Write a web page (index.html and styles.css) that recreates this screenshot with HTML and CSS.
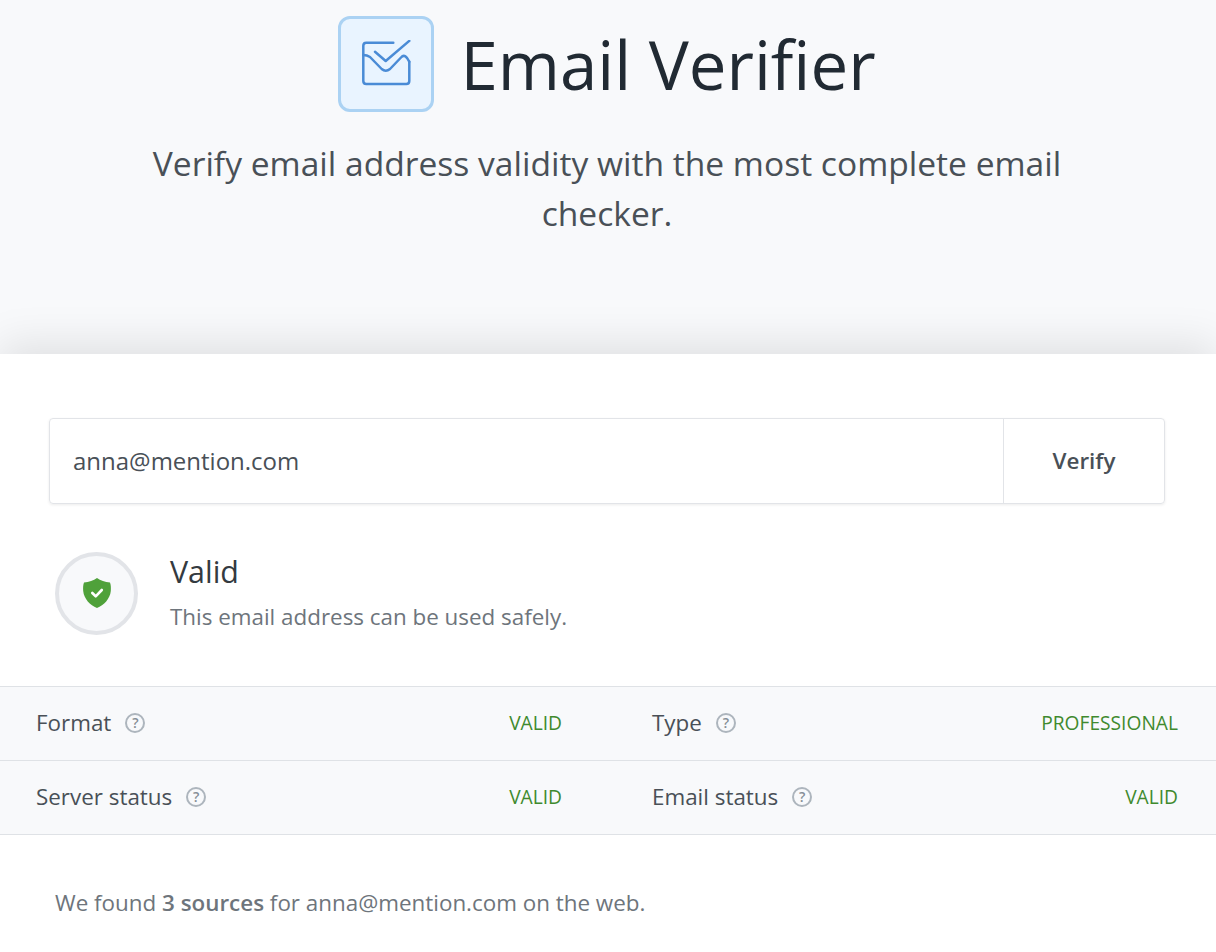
FILE: index.html
```html
<!DOCTYPE html>
<html lang="en">
<head>
  <meta charset="UTF-8">
  <title>Email Verifier</title>
  <link rel="stylesheet" href="styles.css">
</head>
<body>

  <header class="hero">
    <div class="hero-title">
      <div class="hero-icon">
        <svg width="50" height="48" viewBox="0 0 50 48" fill="none" stroke="#4a8bd6" stroke-width="2.500" stroke-linecap="round" stroke-linejoin="round">
          <path d="M32.300 2.700H5.300Q2.300 2.700 2.300 5.700V41Q2.300 44 5.300 44H45.300Q48.300 44 48.300 41V21.700"/>
          <path d="M2.300 15Q6 15 9 17L20.700 29Q24.700 32.500 29 29L40 17.500C43 14 46 16.500 48.300 21.700"/>
          <path d="M14 11.700L24.700 21L48.300 0.900"/>
        </svg>
      </div>
      <h1>Email Verifier</h1>
    </div>
    <p class="hero-text">Verify email address validity with the most complete email checker.</p>
  </header>

  <main class="panel">
    <form class="verify-form">
      <div class="verify-input">anna@mention.com</div>
      <div class="verify-button">Verify</div>
    </form>

    <div class="result">
      <div class="result-badge">
        <svg class="result-shield" width="30" height="32" viewBox="0 0 30 32">
          <path d="M15 1C18.500 3.500 23 5 28 5.500C29 8 29 11 28.800 14C28 22 22 28 15 31C8 28 2 22 1.200 14C1 11 1 8 2 5.500C7 5 11.500 3.500 15 1Z" fill="#4fa13a"/>
          <path d="M10.300 16L13.700 19.300L19.800 13" fill="none" stroke="#fff" stroke-width="2.600" stroke-linecap="round" stroke-linejoin="round"/>
        </svg>
      </div>
      <div>
        <div class="result-title">Valid</div>
        <div class="result-text">This email address can be used safely.</div>
      </div>
    </div>

    <div class="details">
      <div class="details-row">
        <div class="detail">
          <span class="detail-label">Format</span>
          <span class="help">?</span>
          <span class="detail-value">VALID</span>
        </div>
        <div class="detail">
          <span class="detail-label">Type</span>
          <span class="help">?</span>
          <span class="detail-value">PROFESSIONAL</span>
        </div>
      </div>
      <div class="details-row">
        <div class="detail">
          <span class="detail-label">Server status</span>
          <span class="help">?</span>
          <span class="detail-value">VALID</span>
        </div>
        <div class="detail">
          <span class="detail-label">Email status</span>
          <span class="help">?</span>
          <span class="detail-value">VALID</span>
        </div>
      </div>
    </div>

    <p class="sources">We found <b>3 sources</b> for anna@mention.com on the web.</p>
  </main>

</body>
</html>
```

FILE: styles.css
```css
html, body {
  height: 100%;
}

body {
  margin: 0;
  display: flex;
  flex-direction: column;
  font-family: "Open Sans", sans-serif;
  background-color: #fff;
  color: #495057;
  overflow: hidden;
}

.hero {
  height: 354px;
  flex: none;
  box-sizing: border-box;
  padding-top: 16px;
  background-color: #f8f9fb;
}

.hero-title {
  display: flex;
  justify-content: center;
  align-items: center;
  gap: 26px;
  padding-right: 2px;
}

.hero-icon {
  width: 96px;
  height: 96px;
  box-sizing: border-box;
  display: flex;
  justify-content: center;
  align-items: center;
  background-color: #e9f4ff;
  border: 3px solid #abd2f3;
  border-radius: 12px;
}

h1 {
  margin: 0;
  font-size: 67.2px;
  font-weight: 400;
  line-height: 96px;
  color: #212a33;
}

.hero-text {
  width: 960px;
  margin: 26px auto 0;
  padding-right: 2px;
  font-size: 33.6px;
  line-height: 50px;
  text-align: center;
  color: #495057;
}

.panel {
  flex: 1;
  position: relative;
  background-color: #fff;
  padding-top: 64px;
  box-shadow: 0 -10px 40px rgba(0, 0, 0, 0.1);
}

.verify-form {
  display: flex;
  height: 86px;
  box-sizing: border-box;
  margin: 0 51px 0 49px;
  border: 1px solid #e2e4e8;
  border-radius: 4px;
  box-shadow: 0 1px 3px rgba(0, 0, 0, 0.08);
}

.verify-input {
  flex: 1;
  display: flex;
  align-items: center;
  padding: 0 0 2px 23px;
  font-size: 24px;
}

.verify-button {
  width: 161px;
  box-sizing: border-box;
  display: flex;
  justify-content: center;
  align-items: center;
  padding-bottom: 2px;
  border-left: 1px solid #e2e4e8;
  font-size: 22.4px;
  font-weight: 600;
}

.result {
  display: flex;
  align-items: flex-start;
  gap: 32px;
  margin: 48px 0 51px 55px;
}

.result-badge {
  width: 83px;
  height: 83px;
  box-sizing: border-box;
  display: flex;
  justify-content: center;
  align-items: center;
  background-color: #f8f9fb;
  border: 4px solid #e2e4e8;
  border-radius: 50%;
}

.result-shield {
  margin-bottom: 2px;
}

.result-title {
  font-size: 30.4px;
  line-height: 40px;
  color: #343a40;
}

.result-text {
  margin-top: 10px;
  font-size: 22.4px;
  line-height: 30px;
  color: #6e757c;
}

.details {
  border-top: 1px solid #dfe2e6;
}

.details-row {
  display: flex;
  height: 74px;
  box-sizing: border-box;
  padding: 0 38px 0 36px;
  gap: 90px;
  background-color: #f8f9fb;
  border-bottom: 1px solid #dfe2e6;
}

.detail {
  flex: 1;
  display: flex;
  align-items: center;
  padding-bottom: 2px;
}

.detail-label {
  font-size: 22.4px;
}

.help {
  width: 20px;
  height: 20px;
  box-sizing: border-box;
  margin-left: 14px;
  display: flex;
  justify-content: center;
  align-items: center;
  border: 2px solid #adb5bd;
  border-radius: 50%;
  font-size: 14px;
  font-weight: 600;
  color: #868e96;
}

.detail-value {
  margin-left: auto;
  font-size: 19.2px;
  color: #3f8a2e;
}

.sources {
  margin: 53px 0 0 55px;
  font-size: 22.4px;
  line-height: 30px;
  color: #6e757c;
}

.sources b {
  font-weight: 600;
}
```
